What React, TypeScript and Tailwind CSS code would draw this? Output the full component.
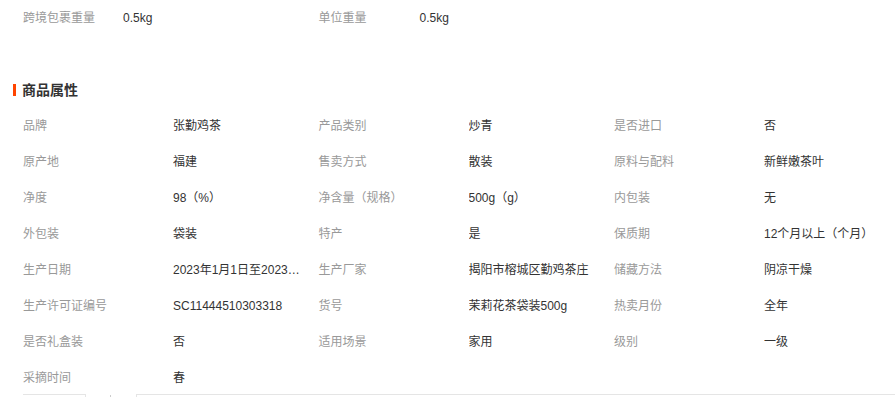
const font = { fontFamily: '"Liberation Sans", "Noto Sans CJK SC", sans-serif' };

const attrs: [string, string][] = [
  ['品牌', '张勤鸡茶'],
  ['产品类别', '炒青'],
  ['是否进口', '否'],
  ['原产地', '福建'],
  ['售卖方式', '散装'],
  ['原料与配料', '新鲜嫩茶叶'],
  ['净度', '98（%）'],
  ['净含量（规格）', '500g（g）'],
  ['内包装', '无'],
  ['外包装', '袋装'],
  ['特产', '是'],
  ['保质期', '12个月以上（个月）'],
  ['生产日期', '2023年1月1日至2023年12月31日'],
  ['生产厂家', '揭阳市榕城区勤鸡茶庄'],
  ['储藏方法', '阴凉干燥'],
  ['生产许可证编号', 'SC11444510303318'],
  ['货号', '茉莉花茶袋装500g'],
  ['热卖月份', '全年'],
  ['是否礼盒装', '否'],
  ['适用场景', '家用'],
  ['级别', '一级'],
  ['采摘时间', '春'],
];

function Attr({ label, value }: { label: string; value: string }) {
  return (
    <div className="flex h-9 items-center text-xs">
      <div className="w-[150px] shrink-0 text-[#999]">{label}</div>
      <div className="w-[130px] truncate text-[#333]">{value}</div>
    </div>
  );
}

export default function App() {
  return (
    <div className="relative h-[397px] w-[895px] overflow-hidden bg-white" style={font}>
      {/* logistics row */}
      <div className="flex h-[35px] items-center pl-[23px] text-xs">
        <div className="flex w-[295.5px]">
          <span className="w-[100px] text-[#999]">跨境包裹重量</span>
          <span className="text-[#333]">0.5kg</span>
        </div>
        <div className="flex">
          <span className="w-[101px] text-[#999]">单位重量</span>
          <span className="text-[#333]">0.5kg</span>
        </div>
      </div>

      {/* section title */}
      <div className="mt-[45px] flex h-5 items-center pl-[13px]">
        <span className="mr-[6px] h-[12px] w-[3px] bg-[#ff4400]" />
        <h3 className="text-sm font-bold text-[#333]">商品属性</h3>
      </div>

      <div className="mt-[8px] grid w-[910px] grid-cols-[295.5px_295.5px_295.5px] pl-[23px]">
        {attrs.map(([l, v]) => (
          <Attr key={l} label={l} value={v} />
        ))}
      </div>

      {/* tab bar peeking in */}
      <div className="absolute left-0 top-[394px] flex h-4 w-full">
        <div className="ml-[23px] h-4 w-[63px] border-r border-t border-[#e5e5e5]" />
        <div className="ml-[24px] mt-[1px] h-[2px] w-px bg-[#ccc]" />
        <div className="ml-[25px] h-4 flex-1 border-l border-t border-[#e5e5e5]" />
      </div>
    </div>
  );
}
